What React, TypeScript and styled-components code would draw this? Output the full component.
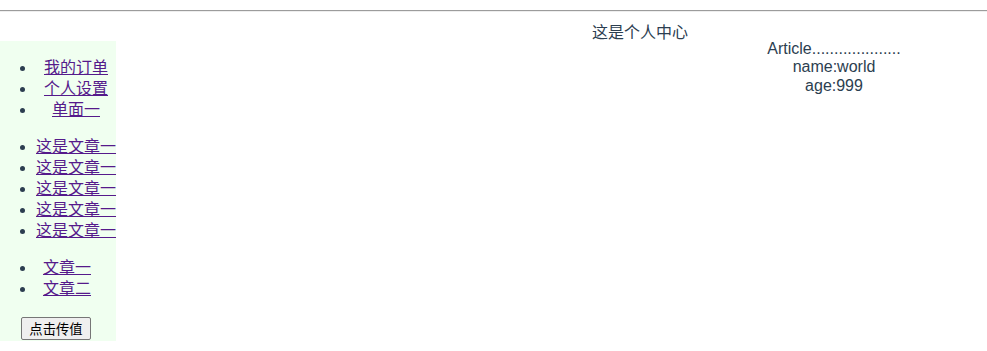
import React from "react";
import styled, { createGlobalStyle } from "styled-components";

const GlobalStyle = createGlobalStyle`
  body {
    margin: 0;
    background: #fff;
    font-family: "Liberation Sans", Arial, "Noto Sans CJK SC", sans-serif;
    color: #2c3e50;
  }
`;

const menu = ["我的订单", "个人设置", "单面一"];
const articles = ["这是文章一", "这是文章一", "这是文章一", "这是文章一", "这是文章一"];
const others = ["文章一", "文章二"];

function App() {
  return (
    <>
      <GlobalStyle />
      <Page.Rule />
      <Page.Title>这是个人中心</Page.Title>
      <Page.Row>
        <Side.Bar>
          <Side.List $width={80}>
            {menu.map((item, idx) => (
              <Side.Item key={idx}>
                <Side.Link href="#">{item}</Side.Link>
              </Side.Item>
            ))}
          </Side.List>
          <Side.List $width={80}>
            {articles.map((item, idx) => (
              <Side.Item key={idx}>
                <Side.Link href="#">{item}</Side.Link>
              </Side.Item>
            ))}
          </Side.List>
          <Side.List $width={62}>
            {others.map((item, idx) => (
              <Side.Item key={idx}>
                <Side.Link href="#">{item}</Side.Link>
              </Side.Item>
            ))}
          </Side.List>
          <Side.ButtonRow>
            <Side.Button type="button">点击传值</Side.Button>
          </Side.ButtonRow>
        </Side.Bar>
        <Page.Main>
          <Article.Block>
            <Article.Line>Article....................</Article.Line>
            <Article.Line>name:world</Article.Line>
            <Article.Line>age:999</Article.Line>
          </Article.Block>
        </Page.Main>
      </Page.Row>
    </>
  );
}

const Page = {
  Rule: styled.hr`
    margin: 10px 0 0;
    border: 0;
    border-top: 1px solid #9c9c9c;
    border-bottom: 1px solid #eeeeee;
  `,
  Title: styled.div`
    margin-top: 10px;
    padding-left: 293px;

    font-size: 16px;
    line-height: 21px;
    text-align: center;
  `,
  Row: styled.div`
    display: flex;
    align-items: flex-start;
    margin-top: -3px;
  `,
  Main: styled.div`
    flex: 1;
    display: flex;
  `,
};

const Side = {
  Bar: styled.nav`
    width: 116px;
    margin-top: 1px;
    padding-bottom: 1px;

    background-color: #f0fff0;
  `,
  List: styled.ul<{ $width: number }>`
    width: ${(p) => p.$width}px;
    margin: 16px 0;
    padding-left: 36px;

    font-size: 16px;
    line-height: 21px;
    text-align: center;
    white-space: nowrap;
  `,
  Item: styled.li``,
  Link: styled.a`
    color: #551a8b;
    text-decoration: underline;
  `,
  ButtonRow: styled.div`
    padding: 2px 0 0 21px;
  `,
  Button: styled.button`
    display: block;
    width: 70px;
    height: 23px;
    padding: 0 6px;

    font-family: "Liberation Sans", Arial, "Noto Sans CJK SC", sans-serif;
    font-size: 13.33px;
    color: #000;

    background-color: #efefef;
    border: 1px solid #767676;
    border-radius: 2px;
  `,
};

const Article = {
  Block: styled.div`
    width: 306px;
    margin-left: auto;
    text-align: center;
  `,
  Line: styled.div`
    font-size: 16px;
    line-height: 18.4px;
  `,
};

export default App;
